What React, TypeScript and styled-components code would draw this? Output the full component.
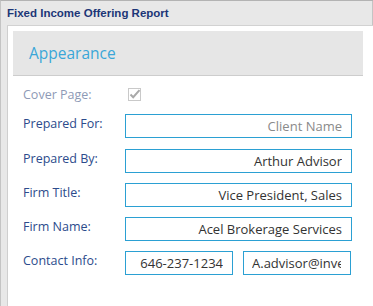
import styled, { createGlobalStyle } from 'styled-components';

const GlobalStyle = createGlobalStyle`
  * {
    margin: 0;
    padding: 0;
    box-sizing: border-box;
  }

  body {
    font-family: 'Open Sans', 'Liberation Sans', sans-serif;
    background: #ffffff;
  }
`;

const Frame = styled.div`
  width: 373px;
  height: 306px;
  display: flex;
  flex-direction: column;
  background: #e8e8e8;
  border-top: 1px solid #b3b3b3;
  border-left: 1px solid #c4c4c4;
  overflow: hidden;
`;

const TitleBar = styled.div`
  height: 24px;
  display: flex;
  align-items: center;
  padding-left: 6px;
  border-right: 1px solid #c4c4c4;
`;

const Title = styled.h1`
  font-family: 'Liberation Sans', Arial, sans-serif;
  font-size: 11.5px;
  font-weight: 700;
  color: #1c3677;
`;

const Panel = styled.div`
  flex: 1;
  margin-left: 6px;
  background: #ffffff;
  border-top: 1px solid #d2d2d2;
  border-left: 1px solid #cfcfcf;
  padding: 5px 10px 0 5px;
`;

const SectionHeader = styled.div`
  height: 45px;
  display: flex;
  align-items: center;
  padding-left: 16px;
  background: #e6e6e6;
  border-bottom: 1px solid #cdcdcd;
`;

const SectionTitle = styled.h2`
  font-size: 15.5px;
  font-weight: 400;
  color: #3aa6d8;
`;

const Form = styled.div`
  display: grid;
  grid-template-columns: 102px 227px;
  row-gap: 10.25px;
  padding: 9px 0 0 10px;
`;

const Label = styled.label<{ $muted?: boolean }>`
  font-size: 12.5px;
  line-height: 18px;
  padding-top: ${p => (p.$muted ? '1px' : '1px')};
  color: ${p => (p.$muted ? '#8e9ab6' : '#2c4b8c')};
`;

const CheckCell = styled.div`
  height: 18px;
  display: flex;
  align-items: center;
  padding-left: 3px;
`;

const Field = styled.input`
  width: 100%;
  height: 24px;
  border: 1px solid #2ba0d3;
  border-radius: 0;
  outline: none;
  padding: 0 9px 0 8px;
  font-family: 'Open Sans', 'Liberation Sans', sans-serif;
  font-size: 13px;
  color: #333333;
  text-align: ${p => (p.dir === 'ltr' ? 'left' : 'right')};
  background: #ffffff;

  &::placeholder {
    color: #8a8a8a;
  }
`;

const Pair = styled.div`
  display: grid;
  grid-template-columns: 108px 108px;
  column-gap: 10px;
`;

const Checkbox = () => (
  <svg width="13" height="13" viewBox="0 0 13 13">
    <rect x="0.5" y="0.5" width="12" height="12" fill="#ffffff" stroke="#c9c9c9" />
    <path d="M2.5 6.5 L5.2 9.2 L11.5 2.2" fill="none" stroke="#a9a9a9" strokeWidth="2" />
  </svg>
);

export default function App() {
  return (
    <>
      <GlobalStyle />
      <Frame>
        <TitleBar>
          <Title>Fixed Income Offering Report</Title>
        </TitleBar>
        <Panel>
          <SectionHeader>
            <SectionTitle>Appearance</SectionTitle>
          </SectionHeader>
          <Form>
            <Label $muted>Cover Page:</Label>
            <CheckCell>
              <Checkbox />
            </CheckCell>

            <Label>Prepared For:</Label>
            <Field readOnly placeholder="Client Name" />

            <Label>Prepared By:</Label>
            <Field readOnly value="Arthur Advisor" />

            <Label>Firm Title:</Label>
            <Field readOnly value="Vice President, Sales" />

            <Label>Firm Name:</Label>
            <Field readOnly value="Acel Brokerage Services" />

            <Label>Contact Info:</Label>
            <Pair>
              <Field readOnly value="646-237-1234" />
              <Field readOnly dir="ltr" value="A.advisor@investments.com" />
            </Pair>
          </Form>
        </Panel>
      </Frame>
    </>
  );
}
